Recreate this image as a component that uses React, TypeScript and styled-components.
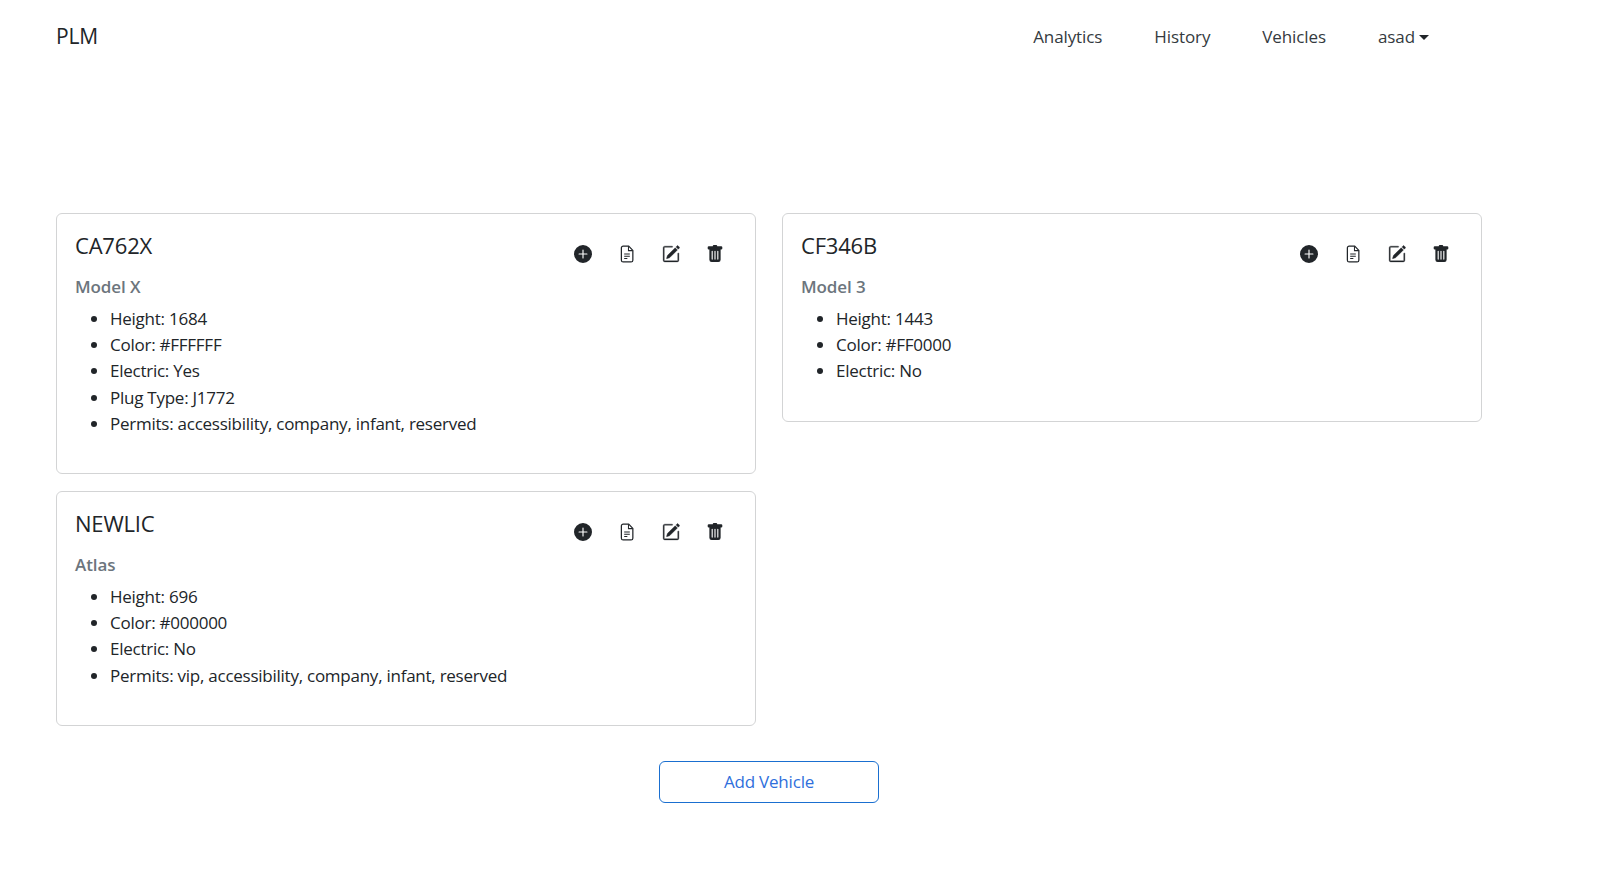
import React from "react";
import styled, { createGlobalStyle } from "styled-components";
import { BsPlusCircleFill, BsPencilSquare, BsTrashFill } from "react-icons/bs";

const Global = createGlobalStyle`
  html, body { margin: 0; padding: 0; background: #fff; }
  body { font-family: "Open Sans", "Noto Sans", "Liberation Sans", sans-serif; color: #212529; }
`;

const Page = styled.div`
  width: 1426px;
  padding: 0 0 0 56px;
`;

const Nav = styled.nav`
  height: 72px;
  display: flex;
  align-items: center;
  justify-content: space-between;
`;

const Brand = styled.a`
  font-size: 21px;
  letter-spacing: -0.2px;
  color: #212529;
`;

const NavLinks = styled.div`
  display: flex;
  gap: 52px;
  margin-right: 53px;
  font-size: 17px;
  letter-spacing: -0.1px;
  color: #343a40;
`;

const Caret = styled.span`
  display: inline-block;
  margin-left: 4px;
  vertical-align: 3px;
  border-top: 5px solid #212529;
  border-left: 5.5px solid transparent;
  border-right: 5.5px solid transparent;
`;

const Grid = styled.div`
  margin-top: 141px;
  display: grid;
  grid-template-columns: 700px 700px;
  column-gap: 26px;
  align-items: start;
`;

const Column = styled.div`
  display: flex;
  flex-direction: column;
  gap: 17px;
`;

const Card = styled.section`
  position: relative;
  box-sizing: border-box;
  border: 1px solid #d3d4d5;
  border-radius: 6px;
  padding: 15px 18px 20px;
`;

const Title = styled.h5`
  margin: 0 0 15px;
  font-size: 22px;
  font-weight: 500;
  line-height: 32px;
  letter-spacing: -0.2px;
`;

const Sub = styled.h6`
  margin: 0 0 8px;
  font-size: 17px;
  font-weight: 600;
  line-height: 22px;
  letter-spacing: -0.1px;
  color: #6c757d;
`;

const Specs = styled.ul`
  margin: 0 0 16px;
  padding-left: 35px;
  font-size: 17px;
  line-height: 26.2px;
  letter-spacing: -0.25px;
`;

const Actions = styled.div`
  position: absolute;
  top: 31px;
  right: 31px;
  display: flex;
  gap: 26px;
  color: #212529;
  & > svg { display: block; width: 18px; height: 18px; }
`;

const AddRow = styled.div`
  display: flex;
  justify-content: center;
  margin-top: 35px;
`;

const AddButton = styled.button`
  width: 220px;
  height: 42px;
  background: #fff;
  border: 1px solid #1a6fd0;
  border-radius: 6px;
  color: #2f6fdc;
  font: inherit;
  font-size: 17px;
  letter-spacing: -0.2px;
`;

const FileIcon = () => (
  <svg viewBox="0 0 16 16" fill="none" stroke="currentColor" strokeWidth="1.1">
    <path d="M4.6 1h4.9L13.2 4.8v8.7a1.6 1.6 0 0 1-1.6 1.6H4.6A1.6 1.6 0 0 1 3 13.5V2.6A1.6 1.6 0 0 1 4.6 1z" />
    <path d="M9.3 1.2v3.8h3.7" strokeWidth="0.9" />
    <path d="M5.5 8h5M5.5 10h5M5.5 12h2.8" strokeWidth="1" />
  </svg>
);

const BoldPencil = styled(BsPencilSquare)`
  stroke: currentColor;
  stroke-width: 0.3px;
`;

type Vehicle = { plate: string; model: string; specs: string[] };

const left: Vehicle[] = [
  { plate: "CA762X", model: "Model X", specs: ["Height: 1684", "Color: #FFFFFF", "Electric: Yes", "Plug Type: J1772", "Permits: accessibility, company, infant, reserved"] },
  { plate: "NEWLIC", model: "Atlas", specs: ["Height: 696", "Color: #000000", "Electric: No", "Permits: vip, accessibility, company, infant, reserved"] },
];
const right: Vehicle[] = [
  { plate: "CF346B", model: "Model 3", specs: ["Height: 1443", "Color: #FF0000", "Electric: No"] },
];

const VehicleCard = ({ v }: { v: Vehicle }) => (
  <Card>
    <Title>{v.plate}</Title>
    <Sub>{v.model}</Sub>
    <Specs>{v.specs.map((s) => <li key={s}>{s}</li>)}</Specs>
    <Actions>
      <BsPlusCircleFill />
      <FileIcon />
      <BoldPencil />
      <BsTrashFill />
    </Actions>
  </Card>
);

export default function App() {
  return (
    <>
      <Global />
      <Page>
        <Nav>
          <Brand>PLM</Brand>
          <NavLinks>
            <span>Analytics</span>
            <span>History</span>
            <span>Vehicles</span>
            <span>asad<Caret /></span>
          </NavLinks>
        </Nav>
        <Grid>
          <Column>{left.map((v) => <VehicleCard key={v.plate} v={v} />)}</Column>
          <Column>{right.map((v) => <VehicleCard key={v.plate} v={v} />)}</Column>
        </Grid>
        <AddRow><AddButton>Add Vehicle</AddButton></AddRow>
      </Page>
    </>
  );
}
